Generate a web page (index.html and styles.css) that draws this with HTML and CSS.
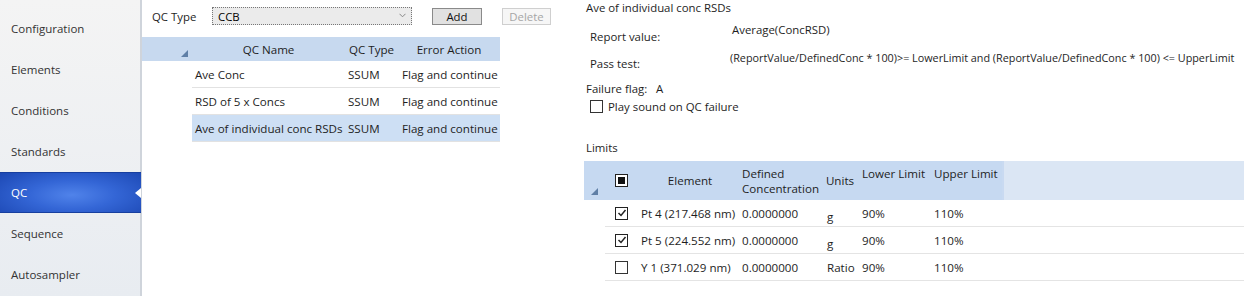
FILE: index.html
```html
<!DOCTYPE html>
<html>
<head>
<meta charset="utf-8">
<link rel="stylesheet" href="styles.css">
</head>
<body>
<nav class="sidebar">
  <div class="nav-item">Configuration</div>
  <div class="nav-item">Elements</div>
  <div class="nav-item">Conditions</div>
  <div class="nav-item">Standards</div>
  <div class="nav-item active">QC<span class="notch"></span></div>
  <div class="nav-item">Sequence</div>
  <div class="nav-item">Autosampler</div>
</nav>
<div class="sep"></div>
<main class="main">
  <section class="left">
    <div class="toolbar">
      <span class="tb-label">QC Type</span>
      <div class="select"><span>CCB</span><svg class="chev" width="7" height="5" viewBox="0 0 7 5"><path d="M0.5 0.8 L3.5 3.8 L6.5 0.8" fill="none" stroke="#888" stroke-width="1"/></svg></div>
      <button class="btn add">Add</button>
      <button class="btn del">Delete</button>
    </div>
    <div class="qcgrid">
      <div class="qhead">
        <div class="qc-ind"><svg class="sort" width="7" height="7" viewBox="0 0 7 7"><path d="M7 0 L7 7 L0 7 Z" fill="#5f7fa6"/></svg></div>
        <div class="qc-name hc">QC Name</div>
        <div class="qc-type hc">QC Type</div>
        <div class="qc-act hc">Error Action</div>
      </div>
      <div class="qrow"><div class="qc-ind"></div><div class="qcells"><div class="qc-name">Ave Conc</div><div class="qc-type">SSUM</div><div class="qc-act">Flag and continue</div></div></div>
      <div class="qrow"><div class="qc-ind"></div><div class="qcells"><div class="qc-name">RSD of 5 x Concs</div><div class="qc-type">SSUM</div><div class="qc-act">Flag and continue</div></div></div>
      <div class="qrow"><div class="qc-ind"></div><div class="qcells sel"><div class="qc-name">Ave of individual conc RSDs</div><div class="qc-type">SSUM</div><div class="qc-act">Flag and continue</div></div></div>
    </div>
  </section>
  <section class="right">
    <div class="title">Ave of individual conc RSDs</div>
    <div class="prop p1"><span class="plabel">Report value:</span><span class="pval">Average(ConcRSD)</span></div>
    <div class="prop p2"><span class="plabel">Pass test:</span><span class="pval formula">(ReportValue/DefinedConc * 100)&gt;= LowerLimit and (ReportValue/DefinedConc * 100) &lt;= UpperLimit</span></div>
    <div class="flag">Failure flag:&nbsp;&nbsp; A</div>
    <div class="sound"><span class="cb"></span><span>Play sound on QC failure</span></div>
    <div class="limits-label">Limits</div>
    <div class="lgrid">
      <div class="lhead">
        <div class="l-ind"><svg class="sort" width="7" height="7" viewBox="0 0 7 7"><path d="M7 0 L7 7 L0 7 Z" fill="#5f7fa6"/></svg></div>
        <div class="l-cb"><span class="cb dark"><span class="fill"></span></span></div>
        <div class="l-el hc mid">Element</div>
        <div class="l-def hcol">Defined<br>Concentration</div>
        <div class="l-un hc mid">Units</div>
        <div class="l-lo htop">Lower Limit</div>
        <div class="l-up htop">Upper Limit</div>
        <div class="l-fill"></div>
      </div>
      <div class="lrow">
        <div class="l-ind"></div>
        <div class="l-cb"><span class="cb dark"><svg width="10" height="10" viewBox="0 0 10 10"><path d="M1.5 5 L4 7.5 L8.5 2" fill="none" stroke="#222" stroke-width="1.5"/></svg></span></div>
        <div class="l-el">Pt 4 (217.468 nm)</div><div class="l-def">0.0000000</div><div class="l-un low">g</div><div class="l-lo">90%</div><div class="l-up">110%</div>
      </div>
      <div class="lrow">
        <div class="l-ind"></div>
        <div class="l-cb"><span class="cb dark"><svg width="10" height="10" viewBox="0 0 10 10"><path d="M1.5 5 L4 7.5 L8.5 2" fill="none" stroke="#222" stroke-width="1.5"/></svg></span></div>
        <div class="l-el">Pt 5 (224.552 nm)</div><div class="l-def">0.0000000</div><div class="l-un low">g</div><div class="l-lo">90%</div><div class="l-up">110%</div>
      </div>
      <div class="lrow">
        <div class="l-ind"></div>
        <div class="l-cb"><span class="cb"></span></div>
        <div class="l-el">Y 1 (371.029 nm)</div><div class="l-def">0.0000000</div><div class="l-un">Ratio</div><div class="l-lo">90%</div><div class="l-up">110%</div>
      </div>
    </div>
  </section>
</main>
</body>
</html>
```
FILE: styles.css
```css
* { box-sizing: border-box; }
html, body { margin: 0; padding: 0; }
body {
  width: 1244px; height: 296px; overflow: hidden;
  display: flex;
  background: #fff;
  font-family: "Open Sans", "Noto Sans", sans-serif;
  font-size: 11.4px;
  color: #1e1e1e;
}
.sidebar {
  width: 140px; flex: none;
  background: linear-gradient(#f4f4f4, #e8ecf1);
  padding-top: 8px;
}
.sep { width: 2px; flex: none; background: #cfd4db; }
.nav-item {
  height: 41px; display: flex; align-items: center;
  padding-left: 11px; color: #333; font-size: 11.5px;
  position: relative;
}
.nav-item.active {
  background: radial-gradient(ellipse 95px 32px at 72px 22px, #5083ea 0%, #3466d6 45%, #1d49b5 100%);
  color: #fff; width: 141px;
  border-top: 1px solid #173f9f; border-bottom: 1px solid #173f9f;
}
.notch {
  position: absolute; right: 0; top: 15px;
  width: 0; height: 0;
  border-top: 5px solid transparent; border-bottom: 5px solid transparent;
  border-right: 6px solid #fff;
}
.main { flex: 1; display: flex; }
.left { width: 442px; flex: none; padding-top: 7px; font-size: 11.6px; }
.toolbar { display: flex; align-items: center; height: 18px; padding-left: 10px; font-size: 11.4px; }
.tb-label { width: 60px; }
.select {
  width: 200px; height: 18px;
  background: #ebebeb; border: 1px dotted #777;
  display: flex; align-items: center; justify-content: space-between;
  padding: 0 5px 0 5px; color: #000;
}
.chev { margin-bottom: 2px; }
.btn {
  font: inherit; height: 17px; padding: 0;
  display: flex; align-items: center; justify-content: center;
}
.add { width: 50px; margin-left: 20px; background: #e1e1e1; border: 1px solid #8a8a8a; color: #111; }
.del { width: 49px; margin-left: 20px; background: #f6f6f6; border: 1px solid #cfcfcf; color: #a6a6a6; }
.qcgrid { margin-top: 12px; width: 358px; }
.qhead { display: flex; height: 24px; background: #c7d9ef; align-items: center; }
.qc-ind { width: 50px; flex: none; height: 100%; position: relative; }
.qhead .sort { position: absolute; left: 39px; top: 13px; }
.qc-name { width: 153px; flex: none; padding-left: 3px; white-space: nowrap; }
.qc-type { width: 53px; flex: none; padding-left: 3px; }
.qc-act { width: 102px; flex: none; padding-left: 4px; white-space: nowrap; }
.hc { text-align: center; padding-left: 0; }
.qrow { display: flex; height: 27px; }
.qcells { flex: 1; display: flex; align-items: center; border-bottom: 1px solid #e2e2e2; }
.qcells.sel { background: #cddff4; }
.right { flex: 1; padding-left: 2px; }
.title { height: 16px; line-height: 16px; }
.prop { display: flex; padding-left: 4px; }
.plabel { width: 142px; flex: none; }
.p1 { margin-top: 6px; height: 28px; }
.p1 .plabel { margin-top: 7px; }
.p2 { height: 31px; }
.p2 .plabel { margin-top: 6px; }
.p2 .pval { margin-left: -2px; }
.formula { font-size: 10.8px; }
.flag { height: 15px; line-height: 15px; }
.sound { display: flex; align-items: center; height: 16px; margin-top: 2px; padding-left: 4px; gap: 5px; }
.cb {
  width: 13px; height: 13px; border: 1px solid #333; background: #fff;
  display: inline-flex; align-items: center; justify-content: center; flex: none;
}
.cb.dark { border-color: #222; }
.fill { width: 7px; height: 7px; background: #111; }
.limits-label { margin-top: 27px; height: 13px; line-height: 13px; }
.lgrid { margin-top: 7px; margin-left: -2px; font-size: 11.6px; }
.lhead { display: flex; height: 39px; background: #c6d9f1; }
.l-ind { width: 24px; flex: none; position: relative; }
.lhead .sort { position: absolute; left: 7px; top: 27px; }
.l-cb { width: 26px; flex: none; display: flex; align-items: center; padding-left: 7px; }
.l-el { width: 104px; flex: none; padding-left: 7px; white-space: nowrap; }
.l-def { width: 84px; flex: none; padding-left: 4px; }
.l-un { width: 36px; flex: none; padding-left: 5px; }
.l-lo { width: 73px; flex: none; padding-left: 4px; white-space: nowrap; }
.l-up { width: 71px; flex: none; padding-left: 3px; white-space: nowrap; }
.l-fill { flex: 1; background: #dbe6f4; border-left: 2px solid #c9daf1; }
.lhead > div { display: flex; }
.lhead .mid { align-items: center; justify-content: center; padding-left: 0; }
.lhead .l-el.mid { padding-left: 8px; }
.hcol { align-items: center; line-height: 15px; }
.htop { align-items: flex-start; padding-top: 5px; }
.lrow { display: flex; height: 27px; align-items: center; border-bottom: 1px solid #e4e4e4; margin-left: 21px; }
.lrow .l-ind { width: 3px; }
.low { padding-top: 6px; }
```
